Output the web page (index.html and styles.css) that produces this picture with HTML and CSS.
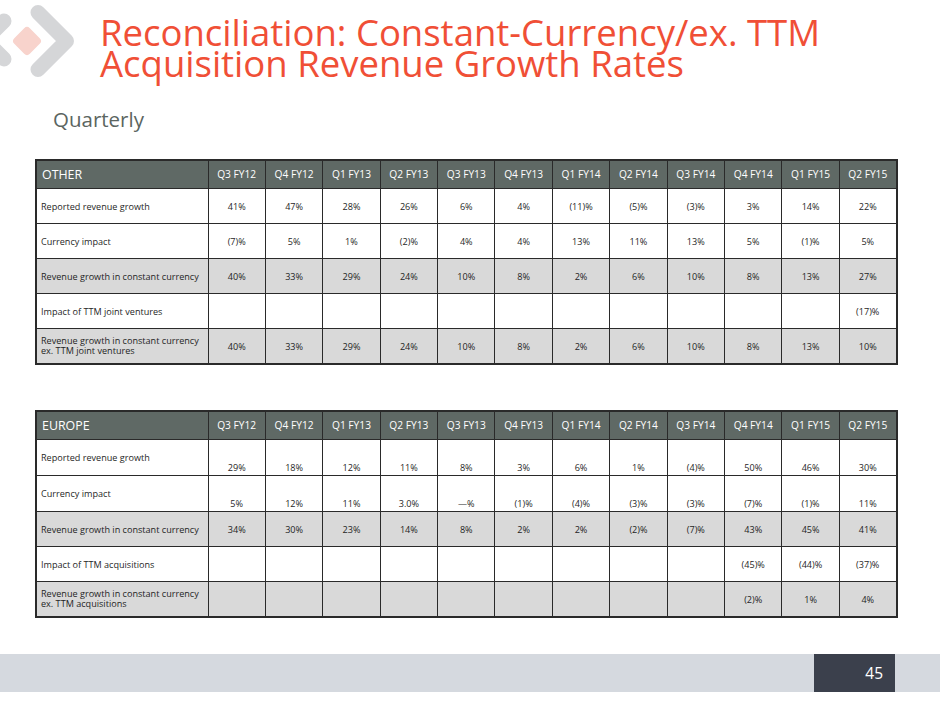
FILE: index.html
```html
<!DOCTYPE html>
<html>
<head>
<meta charset="utf-8">
<link rel="stylesheet" href="styles.css">
</head>
<body>
<div class="slide">
  <header class="head">
    <svg class="logo" width="100" height="84" viewBox="0 0 100 84">
      <polyline points="4,21 -15,40 4,59" fill="none" stroke="#d5d6d8" stroke-width="15" stroke-linecap="round" stroke-linejoin="round"/>
      <rect x="-11" y="-11" width="22" height="22" rx="4" fill="#f8d3cc" transform="translate(27 41) rotate(45)"/>
      <polyline points="38,12.5 66.5,41 38,69.5" fill="none" stroke="#d5d6d8" stroke-width="15" stroke-linecap="round" stroke-linejoin="round"/>
    </svg>
    <h1 class="title"><span class="tline">Reconciliation: Constant-Currency/ex. TTM</span><span class="tline">Acquisition Revenue Growth Rates</span></h1>
  </header>
  <h2 class="sub">Quarterly</h2>

  <table class="grid grid-other">
    <colgroup><col class="c-label"><col span="12" class="c-val"></colgroup>
    <thead>
      <tr class="hdr"><th class="region">OTHER</th><th>Q3 FY12</th><th>Q4 FY12</th><th>Q1 FY13</th><th>Q2 FY13</th><th>Q3 FY13</th><th>Q4 FY13</th><th>Q1 FY14</th><th>Q2 FY14</th><th>Q3 FY14</th><th>Q4 FY14</th><th>Q1 FY15</th><th>Q2 FY15</th></tr>
    </thead>
    <tbody>
      <tr><td class="lab">Reported revenue growth</td><td>41%</td><td>47%</td><td>28%</td><td>26%</td><td>6%</td><td>4%</td><td>(11)%</td><td>(5)%</td><td>(3)%</td><td>3%</td><td>14%</td><td>22%</td></tr>
      <tr><td class="lab">Currency impact</td><td>(7)%</td><td>5%</td><td>1%</td><td>(2)%</td><td>4%</td><td>4%</td><td>13%</td><td>11%</td><td>13%</td><td>5%</td><td>(1)%</td><td>5%</td></tr>
      <tr class="shade"><td class="lab">Revenue growth in constant currency</td><td>40%</td><td>33%</td><td>29%</td><td>24%</td><td>10%</td><td>8%</td><td>2%</td><td>6%</td><td>10%</td><td>8%</td><td>13%</td><td>27%</td></tr>
      <tr><td class="lab">Impact of TTM joint ventures</td><td></td><td></td><td></td><td></td><td></td><td></td><td></td><td></td><td></td><td></td><td></td><td>(17)%</td></tr>
      <tr class="shade"><td class="lab"><span class="ll">Revenue growth in constant currency</span><span class="ll">ex. TTM joint ventures</span></td><td>40%</td><td>33%</td><td>29%</td><td>24%</td><td>10%</td><td>8%</td><td>2%</td><td>6%</td><td>10%</td><td>8%</td><td>13%</td><td>10%</td></tr>
    </tbody>
  </table>

  <table class="grid grid-europe">
    <colgroup><col class="c-label"><col span="12" class="c-val"></colgroup>
    <thead>
      <tr class="hdr"><th class="region">EUROPE</th><th>Q3 FY12</th><th>Q4 FY12</th><th>Q1 FY13</th><th>Q2 FY13</th><th>Q3 FY13</th><th>Q4 FY13</th><th>Q1 FY14</th><th>Q2 FY14</th><th>Q3 FY14</th><th>Q4 FY14</th><th>Q1 FY15</th><th>Q2 FY15</th></tr>
    </thead>
    <tbody>
      <tr class="low"><td class="lab">Reported revenue growth</td><td>29%</td><td>18%</td><td>12%</td><td>11%</td><td>8%</td><td>3%</td><td>6%</td><td>1%</td><td>(4)%</td><td>50%</td><td>46%</td><td>30%</td></tr>
      <tr class="low"><td class="lab">Currency impact</td><td>5%</td><td>12%</td><td>11%</td><td>3.0%</td><td>—%</td><td>(1)%</td><td>(4)%</td><td>(3)%</td><td>(3)%</td><td>(7)%</td><td>(1)%</td><td>11%</td></tr>
      <tr class="shade"><td class="lab">Revenue growth in constant currency</td><td>34%</td><td>30%</td><td>23%</td><td>14%</td><td>8%</td><td>2%</td><td>2%</td><td>(2)%</td><td>(7)%</td><td>43%</td><td>45%</td><td>41%</td></tr>
      <tr><td class="lab">Impact of TTM acquisitions</td><td></td><td></td><td></td><td></td><td></td><td></td><td></td><td></td><td></td><td>(45)%</td><td>(44)%</td><td>(37)%</td></tr>
      <tr class="shade"><td class="lab"><span class="ll">Revenue growth in constant currency</span><span class="ll">ex. TTM acquisitions</span></td><td></td><td></td><td></td><td></td><td></td><td></td><td></td><td></td><td></td><td>(2)%</td><td>1%</td><td>4%</td></tr>
    </tbody>
  </table>

  <footer class="foot"><div class="page">45</div></footer>
</div>
</body>
</html>
```
FILE: styles.css
```css
html, body {
  margin: 0;
  padding: 0;
  background: #ffffff;
}
.slide {
  width: 940px;
  height: 705px;
  position: relative;
  overflow: hidden;
  font-family: "Open Sans", "Liberation Sans", sans-serif;
  color: #1f1f1f;
}
.head {
  display: flex;
  align-items: flex-start;
  height: 90px;
}
.logo {
  flex: none;
  display: block;
}
.title {
  margin: 17px 0 0 0;
  font-weight: 400;
  font-size: 36.5px;
  line-height: 31px;
  color: #f04f36;
  white-space: nowrap;
}
.tline {
  display: block;
  height: 31px;
}
.sub {
  margin: 15px 0 0 53px;
  font-weight: 400;
  font-size: 20.5px;
  line-height: 28px;
  color: #5b6561;
  height: 28px;
}
.grid {
  border-collapse: collapse;
  table-layout: fixed;
  width: 861px;
  margin-left: 35px;
  border: 2px solid #2a2a2a;
}
.grid-other { margin-top: 26px; }
.grid-europe { margin-top: 45px; }
.c-label { width: 172px; }
.c-val { width: 57.4px; }
.grid th, .grid td {
  border: 1.5px solid #2a2a2a;
  padding: 0;
  text-align: center;
  vertical-align: middle;
  font-size: 9.1px;
  line-height: 11px;
  font-weight: 400;
}
.hdr th {
  background: #5f6965;
  color: #ffffff;
  height: 27px;
  font-size: 10.2px;
}
.hdr .region {
  text-align: left;
  padding-left: 5px;
  font-size: 12.4px;
}
.grid td { height: 34px; }
.grid td.lab {
  text-align: left;
  padding-left: 4px;
}
.ll {
  display: block;
  height: 10.5px;
  line-height: 10.5px;
}
.shade td { background: #d9d9d9; }
.low td {
  height: 32.5px;
  vertical-align: bottom;
  padding-bottom: 2.5px;
}
.low td.lab {
  vertical-align: middle;
  padding-bottom: 0;
  height: 35px;
}
.foot {
  position: absolute;
  left: 0;
  right: 0;
  top: 654px;
  height: 38px;
  background: #d5d9df;
  display: flex;
  justify-content: flex-end;
  padding-right: 45px;
}
.page {
  width: 81px;
  background: #3b404c;
  color: #ffffff;
  font-size: 15.5px;
  line-height: 38px;
  text-align: right;
  padding-right: 12px;
  box-sizing: border-box;
}
```
